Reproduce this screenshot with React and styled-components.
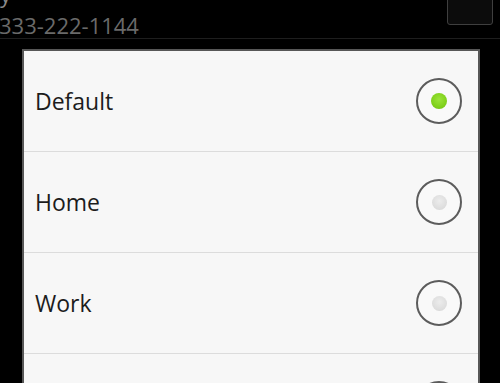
import React from "react";
import styled, { createGlobalStyle } from "styled-components";

const Global = createGlobalStyle`
  html, body { margin: 0; padding: 0; background: #000; overflow: hidden; }
  body { width: 500px; height: 383px; font-family: "Open Sans", "DejaVu Sans", sans-serif; }
`;

const Screen = styled.div`
  width: 500px;
  height: 383px;
  background: #000;
  overflow: hidden;
`;

const Header = styled.div`
  position: relative;
  height: 38px;
  border-bottom: 1px solid #1e1e1e;
  overflow: hidden;
`;

const NameLine = styled.div`
  margin-top: -19px;
  height: 26px;
  font-size: 22px;
  line-height: 26px;
  color: #8a8a8a;
`;

const Phone = styled.div`
  margin-top: 5px;
  margin-left: -1px;
  font-size: 22px;
  line-height: 26px;
  color: #6a6a6a;
`;

const CornerButton = styled.div`
  position: absolute;
  top: -4px;
  right: 7px;
  width: 44px;
  height: 27px;
  border: 1px solid #3f3f3f;
  border-radius: 3px;
  background: #0c0c0c;
`;

const Dialog = styled.div`
  margin: 10px 0 0 22px;
  width: 454px;
  border: 2px solid #575757;
  border-bottom: none;
  background: #f7f7f7;
`;

const Row = styled.div`
  display: flex;
  align-items: center;
  justify-content: space-between;
  height: 100px;
  padding: 0 16px 0 11px;
  border-bottom: 1px solid #dcdcdc;
`;

const Label = styled.span`
  font-size: 23px;
  color: #1c1c1c;
`;

const Radio = styled.div`
  width: 42px;
  height: 42px;
  border-radius: 50%;
  border: 2px solid #5c5c5c;
  display: flex;
  align-items: center;
  justify-content: center;
  background: #f9f9f9;
`;

const Dot = styled.div`
  width: ${(p) => (p.$on ? 16 : 15)}px;
  height: ${(p) => (p.$on ? 16 : 15)}px;
  border-radius: 50%;
  background: ${(p) =>
    p.$on
      ? "radial-gradient(circle at 50% 40%, #9be43a 0%, #80d11c 60%, #6cb814 100%)"
      : "radial-gradient(circle at 50% 40%, #ececec 0%, #dcdcdc 70%, #cfcfcf 100%)"};
`;

const options = [
  { label: "Default", on: true },
  { label: "Home", on: false },
  { label: "Work", on: false },
  { label: "Mobile", on: false },
];

export default function App() {
  return (
    <Screen>
      <Global />
      <Header>
        <NameLine>y</NameLine>
        <Phone>333-222-1144</Phone>
        <CornerButton />
      </Header>
      <Dialog>
        {options.map((o) => (
          <Row key={o.label}>
            <Label>{o.label}</Label>
            <Radio>
              <Dot $on={o.on} />
            </Radio>
          </Row>
        ))}
      </Dialog>
    </Screen>
  );
}
